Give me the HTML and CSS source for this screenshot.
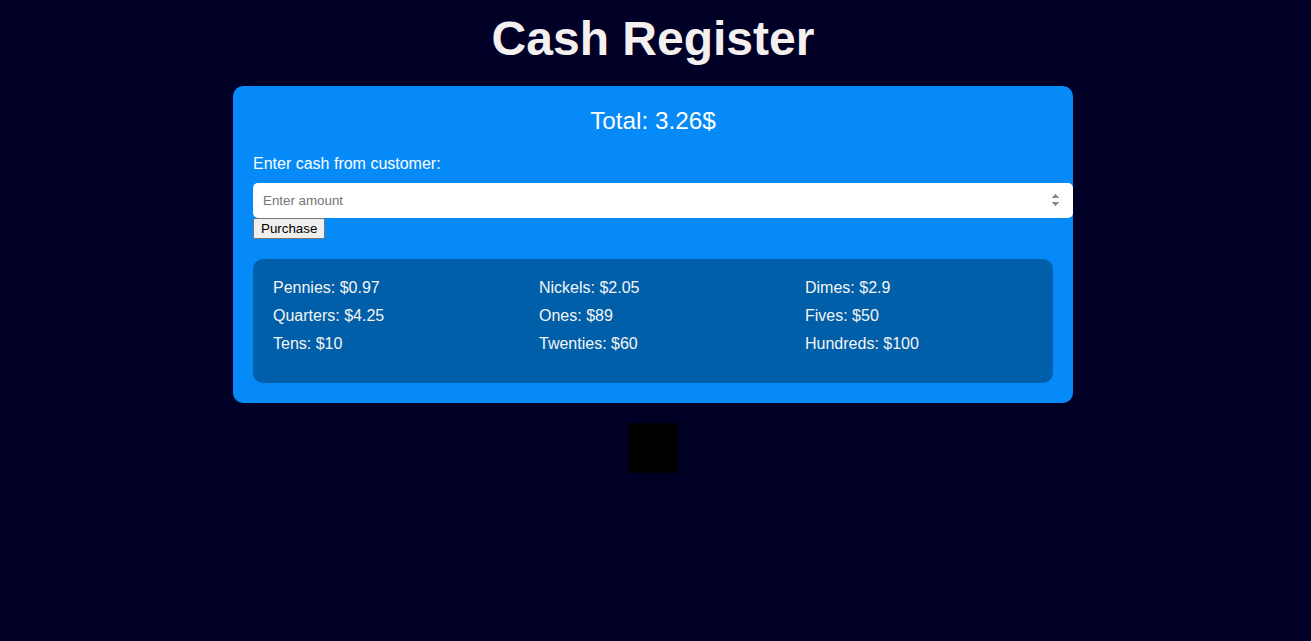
FILE: index.html
```html
<!DOCTYPE html>
<html lang="en">
<head>
<meta charset="UTF-8">
<title>Cash Register</title>
<link rel="stylesheet" href="styles.css">
</head>
<body>
<div class="page">
  <h1 class="title">Cash Register</h1>
  <main class="register">
    <div class="total">Total: 3.26$</div>
    <label class="cash-label" for="cash">Enter cash from customer:</label>
    <input class="cash-input" id="cash" type="number" placeholder="Enter amount">
    <button class="purchase-btn" type="button">Purchase</button>
    <div class="drawer">
      <div class="drawer-item">Pennies: $0.97</div>
      <div class="drawer-item">Nickels: $2.05</div>
      <div class="drawer-item">Dimes: $2.9</div>
      <div class="drawer-item">Quarters: $4.25</div>
      <div class="drawer-item">Ones: $89</div>
      <div class="drawer-item">Fives: $50</div>
      <div class="drawer-item">Tens: $10</div>
      <div class="drawer-item">Twenties: $60</div>
      <div class="drawer-item">Hundreds: $100</div>
    </div>
  </main>
  <div class="change-box"></div>
</div>
</body>
</html>
```
FILE: styles.css
```css
html, body {
  margin: 0;
  padding: 0;
  background: #000026;
}

body {
  font-family: "Liberation Sans", Arial, sans-serif;
  color: #f5f2f2;
}

.page {
  display: flex;
  flex-direction: column;
  align-items: center;
  padding-right: 5px;
}

.title {
  margin: 11px 0 20px;
  font-size: 48px;
  font-weight: bold;
  line-height: normal;
  color: #f5f0f0;
}

.register {
  width: 800px;
  padding: 20px;
  background: #058af8;
  border-radius: 10px;
}

.total {
  text-align: center;
  font-size: 24.3px;
  line-height: 28px;
  padding-top: 1px;
  color: #ffffff;
  margin-bottom: 20px;
}

.cash-label {
  display: block;
  font-size: 16px;
  line-height: 18px;
  margin-bottom: 10px;
  color: #ffffff;
}

.cash-input {
  display: block;
  padding: 10px;
  border: none;
  border-radius: 5px;
  font-family: "Liberation Sans", Arial, sans-serif;
  font-size: 13.333px;
  line-height: 15px;
  height: 35px;
  box-sizing: border-box;
  width: 820px;
  background: #ffffff;
  outline: none;
}

.cash-input::-webkit-inner-spin-button,
.cash-input::-webkit-outer-spin-button {
  opacity: 1;
}

.cash-input::placeholder {
  color: #757575;
}

.purchase-btn {
  display: block;
  font-family: "Liberation Sans", Arial, sans-serif;
  font-size: 13.333px;
  color: #000000;
  background: #efefef;
  border: 1px solid #767676;
  border-radius: 2px;
  padding: 1px 7px;
  height: 21px;
  line-height: 17px;
}

.drawer {
  margin-top: 20px;
  padding: 20px;
  background: #005fa8;
  border-radius: 10px;
  display: grid;
  grid-template-columns: 266px 266px 1fr;
}

.drawer-item {
  font-size: 16px;
  line-height: 18px;
  margin-bottom: 10px;
  color: #f5f5f5;
}

.change-box {
  width: 50px;
  height: 50px;
  margin-top: 20px;
  background: #000000;
}
```
